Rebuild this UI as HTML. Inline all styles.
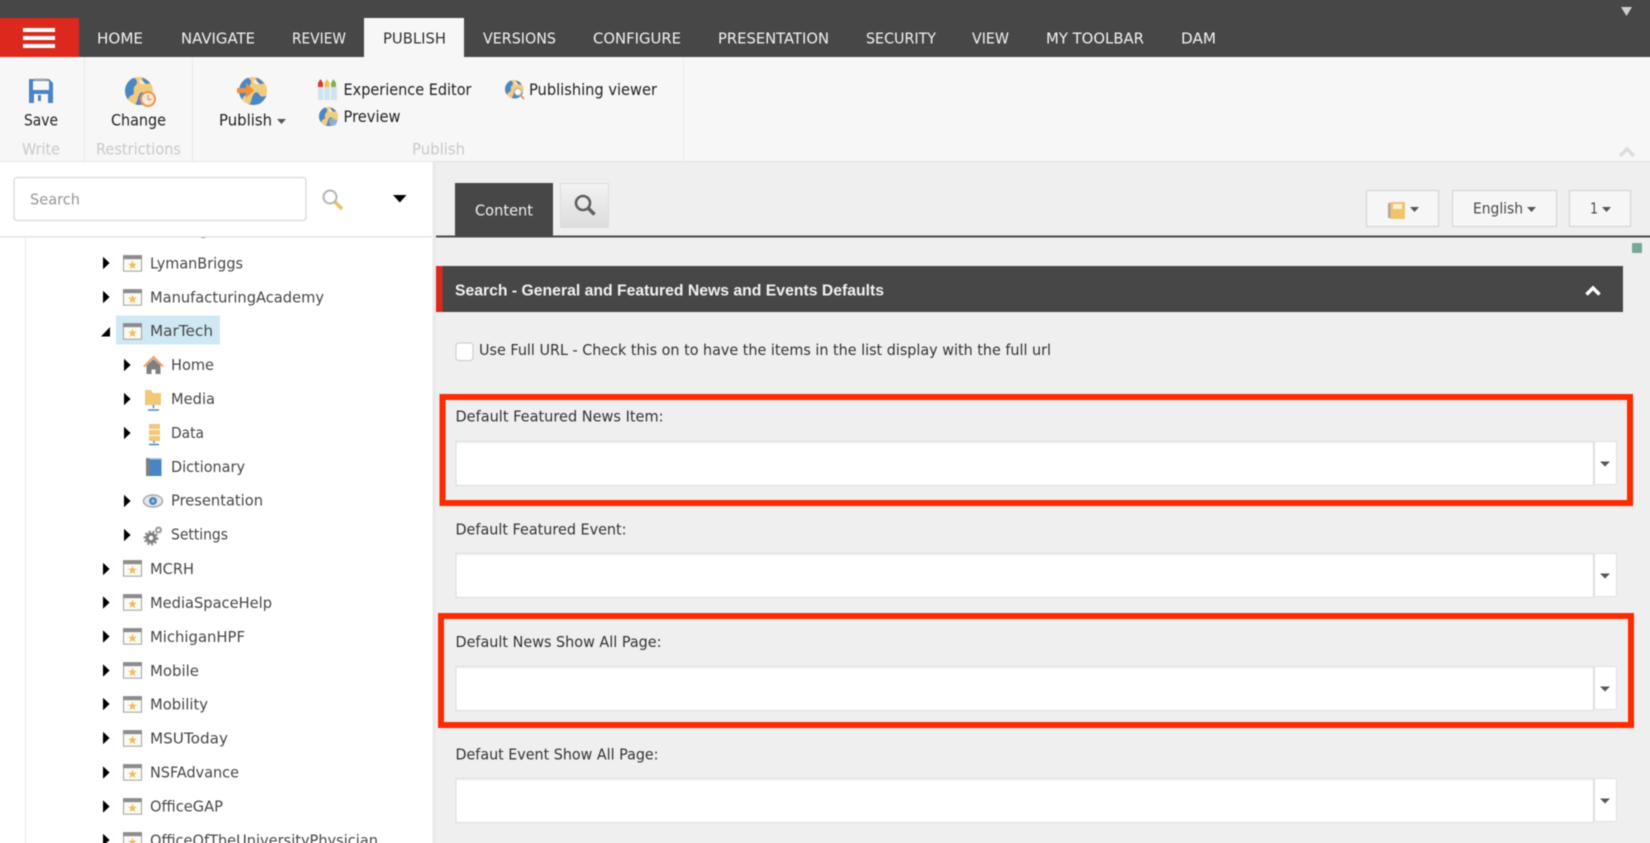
<!DOCTYPE html>
<html><head><meta charset="utf-8"><title>Content Editor</title>
<style>
html,body{margin:0;padding:0;width:1650px;height:843px;background:#efefef}
#wrap{position:relative;width:1650px;height:843px;overflow:hidden}
svg{display:block;position:absolute;left:-10px;top:-10px;filter:blur(.4px)}
text{font-family:"DejaVu Sans","Liberation Sans",sans-serif;font-size:15.2px;fill:#474747}
.tab{fill:#f2f2f2;font-size:15px}
.rb{fill:#222;font-size:15.8px}
.gr{fill:#c9c9c9;font-size:15.8px}
.f{fill:#333;font-size:15.1px}
</style></head><body>
<div id="wrap">
<svg width="1670" height="863" viewBox="-10 -10 1670 863" xmlns="http://www.w3.org/2000/svg">
<defs>
<path id="a" d="M0-6.2 6.6 0 0 6.2Z" fill="#000"/>
<g id="w" transform="translate(0,-.8)">
<rect x=".5" y=".5" width="18" height="15.5" fill="#fafaf4" stroke="#a0a0a0"/>
<rect x="0" y="0" width="19" height="4" fill="#8c8c8c"/>
<path d="M9.5 5.6l1.3 3h3.1l-2.5 2 .9 3.2-2.8-1.8-2.8 1.8.9-3.2-2.5-2h3.1z" fill="#efbd5c"/>
</g>
<g id="globe">
<circle cx="14" cy="14" r="14" fill="#f2cb7e"/>
<path d="M9 .8C4 2.500 0 8 0 14c0 3 1 6 3 8.500 1-3 3-4 5-5 2-2 0-4 1-7 1-2 3-3 3-5 0-2-1-3.500-3-4.700Z" fill="#4b87c6"/>
<path d="M10 27.500c3-3 2-7 5-11 3-3 5 0 6 2 2 2 5 1 6.500 0-2 5-6 9.500-13 9.500Z" fill="#4b87c6"/>
<path d="M17 .5c3 1 6 3 8 6l-4 .5-3-2.500Z" fill="#4b87c6"/>
<path d="M14 3c3 0 5 2 6 4-2 1-4 0-5-1Z" fill="#fbeecb"/>
</g>
<g id="caret"><path d="M0 0H9L4.500 5Z" fill="#555"/></g>
<g id="fld">
<rect x="456" y=".5" width="1137.500" height="44" fill="#fff" stroke="#dcdcdc"/>
<rect x="456.500" y="1" width="1136.500" height="2" fill="#f6f6f6"/>
<rect x="1594.500" y=".5" width="22" height="43" rx="1.500" fill="#fff" stroke="#e0e0e0"/>
<path d="M1600 20.500H1610L1605 25.500Z" fill="#555"/>
</g>
</defs>

<!-- base -->
<rect x="-10" y="-10" width="1670" height="863" fill="#efefef"/>

<!-- top bar -->
<rect x="-10" y="-10" width="1670" height="67" fill="#474747"/>
<rect x="-10" y="18" width="89" height="39" fill="#dd281d"/>
<rect x="23" y="28" width="32" height="4" fill="#fff"/>
<rect x="23" y="36" width="32" height="4" fill="#fff"/>
<rect x="23" y="44" width="32" height="4" fill="#fff"/>
<rect x="364" y="18" width="100" height="39" fill="#f7f7f7"/>
<path d="M1621 7h11l-5.500 9Z" fill="#cfcfcf"/>
<text class="tab" x="97" y="43.500" textLength="46" lengthAdjust="spacingAndGlyphs">HOME</text>
<text class="tab" x="181" y="43.500" textLength="74" lengthAdjust="spacingAndGlyphs">NAVIGATE</text>
<text class="tab" x="292" y="43.500" textLength="54" lengthAdjust="spacingAndGlyphs">REVIEW</text>
<text class="tab" x="383" y="43.500" textLength="63" lengthAdjust="spacingAndGlyphs" style="fill:#333">PUBLISH</text>
<text class="tab" x="483" y="43.500" textLength="73" lengthAdjust="spacingAndGlyphs">VERSIONS</text>
<text class="tab" x="593" y="43.500" textLength="88" lengthAdjust="spacingAndGlyphs">CONFIGURE</text>
<text class="tab" x="718" y="43.500" textLength="111" lengthAdjust="spacingAndGlyphs">PRESENTATION</text>
<text class="tab" x="866" y="43.500" textLength="70" lengthAdjust="spacingAndGlyphs">SECURITY</text>
<text class="tab" x="972" y="43.500" textLength="37" lengthAdjust="spacingAndGlyphs">VIEW</text>
<text class="tab" x="1046" y="43.500" textLength="98" lengthAdjust="spacingAndGlyphs">MY TOOLBAR</text>
<text class="tab" x="1181" y="43.500" textLength="35" lengthAdjust="spacingAndGlyphs">DAM</text>

<!-- ribbon -->
<rect x="-10" y="57" width="1670" height="105" fill="#f7f7f7"/>
<rect x="-10" y="161" width="1670" height="1.500" fill="#e6e6e6"/>
<rect x="84" y="57" width="1" height="104" fill="#e8e8e8"/>
<rect x="192" y="57" width="1" height="104" fill="#e8e8e8"/>
<rect x="683" y="57" width="1" height="104" fill="#ececec"/>
<!-- save icon -->
<path d="M29 79h20l4 4v20H29Z" fill="#4a84c2"/>
<rect x="34" y="78.500" width="13" height="2" fill="#a8a8a8"/>
<rect x="33" y="81" width="16" height="9" fill="#f7f7f7"/>
<rect x="34" y="94" width="14" height="9" fill="#f7f7f7"/>
<rect x="38" y="95" width="3" height="6" fill="#4a84c2"/>
<!-- change icon -->
<use href="#globe" x="125" y="77"/>
<circle cx="148" cy="99" r="7" fill="#fbe9d6" stroke="#ee9350" stroke-width="2"/>
<path d="M148 95v4.500h3.500" fill="none" stroke="#ee9350" stroke-width="1.300"/>
<!-- publish icon -->
<use href="#globe" x="239" y="77"/>
<path d="M237 88h9v-5l8 7.500-8 7.500v-5h-9Z" fill="#ee8f45"/>
<!-- small icons -->
<g>
<rect x="318" y="87" width="19" height="13" fill="#cfe3f0"/>
<path d="M318 87v-4l2.500-4 2.500 4v4Z" fill="#d23a2f"/>
<path d="M324.500 87v-4l2.500-4 2.500 4v4Z" fill="#efc04f"/>
<path d="M331 87v-4l2.500-4 2.500 4v4Z" fill="#86b04a"/>
<path d="M323.700 87v13M330.300 87v13" stroke="#f4f8fb" stroke-width="1"/>
</g>
<g transform="translate(319,107) scale(.68)"><use href="#globe"/></g>
<circle cx="333" cy="122" r="4" fill="#9fb7cf" opacity=".8"/>
<g transform="translate(505,80) scale(.66)"><use href="#globe"/></g>
<circle cx="518" cy="92" r="3.500" fill="#fff" stroke="#aaa"/>
<path d="M520.500 95l3.500 4" stroke="#ee8f45" stroke-width="1.800"/>

<text class="rb" x="24" y="125.500" textLength="34" lengthAdjust="spacingAndGlyphs">Save</text>
<text class="rb" x="111" y="125.500" textLength="55" lengthAdjust="spacingAndGlyphs">Change</text>
<text class="rb" x="219" y="125.500" textLength="53" lengthAdjust="spacingAndGlyphs">Publish</text>
<use href="#caret" x="277" y="119"/>
<text class="rb" x="343.500" y="95" textLength="128" lengthAdjust="spacingAndGlyphs">Experience Editor</text>
<text class="rb" x="343.500" y="122" textLength="57" lengthAdjust="spacingAndGlyphs">Preview</text>
<text class="rb" x="529" y="95" textLength="128" lengthAdjust="spacingAndGlyphs">Publishing viewer</text>
<text class="gr" x="22" y="154.500" textLength="38" lengthAdjust="spacingAndGlyphs">Write</text>
<text class="gr" x="96" y="154.500" textLength="85" lengthAdjust="spacingAndGlyphs">Restrictions</text>
<text class="gr" x="412" y="154.500" textLength="53" lengthAdjust="spacingAndGlyphs">Publish</text>
<path d="M1620 156l7-7 7 7" fill="none" stroke="#dcdcdc" stroke-width="3.500"/>

<!-- left panel -->
<rect x="-10" y="162" width="443" height="691" fill="#fff"/>
<rect x="432.500" y="162" width="3.500" height="691" fill="#e9e9e9"/>
<rect x="25" y="237" width="1" height="616" fill="#ececec"/>

<!-- tree -->
<g>
<rect x="116" y="315.500" width="104" height="29" fill="#cfe8f4"/>
<use href="#w" x="123" y="221"/>
<text x="150" y="235">Lansing</text>

<use href="#a" x="103" y="263"/><use href="#w" x="123" y="256"/>
<text x="150" y="268.500" textLength="93" lengthAdjust="spacingAndGlyphs">LymanBriggs</text>
<use href="#a" x="103" y="297"/><use href="#w" x="123" y="290"/>
<text x="150" y="302.500" textLength="174" lengthAdjust="spacingAndGlyphs">ManufacturingAcademy</text>
<path d="M110 327v9.500h-9Z" fill="#000"/><use href="#w" x="123" y="324"/>
<text x="150" y="336.200" textLength="63" lengthAdjust="spacingAndGlyphs">MarTech</text>

<use href="#a" x="124" y="365"/>
<path d="M144 366.500l9.500-9.500 9.500 9.500" fill="none" stroke="#f0a070" stroke-width="2"/>
<path d="M146.500 365.500l7-6.500 7 6.500v8.500h-5v-4.500h-4v4.500h-5Z" fill="#808080"/>
<text x="171" y="370" textLength="43" lengthAdjust="spacingAndGlyphs">Home</text>

<use href="#a" x="124" y="399"/>
<path d="M145 390h6l2 3h8v12h-16Z" fill="#f2c878"/>
<path d="M153.500 405v3M148 410h11" stroke="#4a84c2" stroke-width="1.500"/>
<text x="171" y="404" textLength="44" lengthAdjust="spacingAndGlyphs">Media</text>

<use href="#a" x="124" y="433"/>
<rect x="149" y="424" width="11" height="5" fill="#f2c878"/><rect x="149" y="430" width="11" height="5" fill="#f2c878"/><rect x="149" y="436" width="11" height="5" fill="#f2c878"/>
<path d="M154 441v2M149 444.500h10" stroke="#4a84c2" stroke-width="1.500"/>
<text x="171" y="438" textLength="33" lengthAdjust="spacingAndGlyphs">Data</text>

<rect x="146" y="458" width="3.500" height="18" fill="#808080"/>
<path d="M149.500 459h12v17h-12Z" fill="#4a84c2"/><rect x="149.500" y="458" width="12" height="1.500" fill="#a8c6e4"/>
<text x="171" y="472" textLength="74" lengthAdjust="spacingAndGlyphs">Dictionary</text>

<use href="#a" x="124" y="501"/>
<ellipse cx="153" cy="501" rx="9.500" ry="6" fill="#e4e8ec" stroke="#a9a9a9" stroke-width="1.500"/>
<circle cx="153" cy="501" r="4" fill="#4a84c2"/><circle cx="153" cy="501" r="1.600" fill="#9cc"/>
<text x="171" y="505.700" textLength="92" lengthAdjust="spacingAndGlyphs">Presentation</text>

<use href="#a" x="124" y="535"/>
<circle cx="151" cy="538" r="5.500" fill="#808080"/><circle cx="151" cy="538" r="2.200" fill="#fff"/>
<circle cx="151" cy="538" r="6.500" fill="none" stroke="#808080" stroke-width="1.800" stroke-dasharray="2 2"/>
<circle cx="158.500" cy="530" r="3.500" fill="#9c9c9c"/><circle cx="158.500" cy="530" r="1.400" fill="#fff"/>
<text x="171" y="539.700" textLength="57" lengthAdjust="spacingAndGlyphs">Settings</text>

<use href="#a" x="103" y="569"/><use href="#w" x="123" y="561"/>
<text x="150" y="574" textLength="44" lengthAdjust="spacingAndGlyphs">MCRH</text>
<use href="#a" x="103" y="602.500"/><use href="#w" x="123" y="595"/>
<text x="150" y="607.800" textLength="122" lengthAdjust="spacingAndGlyphs">MediaSpaceHelp</text>
<use href="#a" x="103" y="636.500"/><use href="#w" x="123" y="629"/>
<text x="150" y="641.800" textLength="95" lengthAdjust="spacingAndGlyphs">MichiganHPF</text>
<use href="#a" x="103" y="670.500"/><use href="#w" x="123" y="663"/>
<text x="150" y="675.800" textLength="49" lengthAdjust="spacingAndGlyphs">Mobile</text>
<use href="#a" x="103" y="704"/><use href="#w" x="123" y="697"/>
<text x="150" y="709.500" textLength="58" lengthAdjust="spacingAndGlyphs">Mobility</text>
<use href="#a" x="103" y="738"/><use href="#w" x="123" y="731"/>
<text x="150" y="743.500" textLength="78" lengthAdjust="spacingAndGlyphs">MSUToday</text>
<use href="#a" x="103" y="772.500"/><use href="#w" x="123" y="765"/>
<text x="150" y="777.500" textLength="89" lengthAdjust="spacingAndGlyphs">NSFAdvance</text>
<use href="#a" x="103" y="806.500"/><use href="#w" x="123" y="799"/>
<text x="150" y="811.500" textLength="73" lengthAdjust="spacingAndGlyphs">OfficeGAP</text>
<use href="#a" x="103" y="840"/><use href="#w" x="123" y="833"/>
<text x="150" y="845.500" textLength="228" lengthAdjust="spacingAndGlyphs">OfficeOfTheUniversityPhysician</text>
</g>

<!-- search header -->
<rect x="-10" y="162" width="442" height="74" fill="#fff"/>
<rect x="-10" y="236" width="442" height="1.500" fill="#e6e6e6"/>
<rect x="14" y="177.500" width="292" height="43" rx="3" fill="#fff" stroke="#dedede" stroke-width="1.500"/>
<text x="30" y="204.500" textLength="50" lengthAdjust="spacingAndGlyphs" style="fill:#979797">Search</text>
<circle cx="330" cy="197" r="6.500" fill="#fff" stroke="#b5b5b5" stroke-width="2"/>
<path d="M335 202l7 7" stroke="#eec06a" stroke-width="3.500"/>
<path d="M393 195h13.500l-6.700 7.500Z" fill="#000"/>

<!-- content tabs -->
<rect x="436" y="235.500" width="1224" height="2" fill="#4a4a4a"/>
<rect x="455" y="183" width="98" height="53" fill="#474747"/>
<text x="475" y="215.500" textLength="58" lengthAdjust="spacingAndGlyphs" style="fill:#f0f0f0">Content</text>
<linearGradient id="g1" x1="0" y1="0" x2="0" y2="1"><stop offset="0" stop-color="#f3f3f3"/><stop offset="1" stop-color="#dcdcdc"/></linearGradient>
<rect x="560.500" y="183.500" width="48" height="44" fill="url(#g1)" stroke="#dddddd"/>
<circle cx="583" cy="203" r="7" fill="none" stroke="#606060" stroke-width="2.600"/>
<path d="M588 208l6.500 6.500" stroke="#606060" stroke-width="3.500"/>

<rect x="1366.500" y="190.500" width="72" height="36" fill="#f6f6f6" stroke="#d6d6d6" stroke-width="1.200"/>
<rect x="1452.500" y="190.500" width="104" height="36" fill="#f6f6f6" stroke="#d6d6d6" stroke-width="1.200"/>
<rect x="1569.500" y="190.500" width="61" height="36" fill="#f6f6f6" stroke="#d6d6d6" stroke-width="1.200"/>
<rect x="1390" y="202" width="15" height="17" rx="1" fill="#f0c36d"/>
<rect x="1388" y="203" width="2.500" height="15" fill="#aaa"/>
<rect x="1393" y="204" width="9" height="5" fill="#fbf0d8"/>
<use href="#caret" x="1410" y="207"/>
<text x="1473" y="213.500" textLength="50" lengthAdjust="spacingAndGlyphs" style="fill:#4a4a4a">English</text>
<use href="#caret" x="1527" y="207"/>
<text x="1590" y="213.500" textLength="8" lengthAdjust="spacingAndGlyphs" style="fill:#4a4a4a">1</text>
<use href="#caret" x="1602" y="207"/>
<rect x="1632" y="243" width="10" height="10" rx="1" fill="#77a898"/>

<!-- section header -->
<rect x="436" y="266" width="1187" height="46" fill="#474747"/>
<rect x="436" y="266" width="6.500" height="46" fill="#dd281d"/>
<text x="455" y="295.300" textLength="429" lengthAdjust="spacingAndGlyphs" style="fill:#f2f2f2;font-weight:bold;font-size:15.800px;font-family:'Liberation Sans',sans-serif">Search - General and Featured News and Events Defaults</text>
<path d="M1586.500 294.500l6.500-6.500 6.500 6.500" fill="none" stroke="#fff" stroke-width="3.500"/>

<!-- checkbox -->
<rect x="456" y="343" width="17" height="17.500" rx="3" fill="#fff" stroke="#c8c8c8"/>
<text class="f" x="479" y="355" textLength="572" lengthAdjust="spacingAndGlyphs">Use Full URL - Check this on to have the items in the list display with the full url</text>

<!-- fields -->
<text class="f" x="455.500" y="421.700" textLength="208" lengthAdjust="spacingAndGlyphs">Default Featured News Item:</text>
<use href="#fld" y="441"/>
<text class="f" x="455.500" y="534.500" textLength="171" lengthAdjust="spacingAndGlyphs">Default Featured Event:</text>
<use href="#fld" y="553"/>
<text class="f" x="455.500" y="646.800" textLength="206" lengthAdjust="spacingAndGlyphs">Default News Show All Page:</text>
<use href="#fld" y="666"/>
<text class="f" x="455.500" y="759.300" textLength="203" lengthAdjust="spacingAndGlyphs">Defaut Event Show All Page:</text>
<use href="#fld" y="778"/>

<!-- red boxes -->
<rect x="442.500" y="397" width="1187.500" height="106" fill="none" stroke="#ff2a00" stroke-width="6"/>
<rect x="441" y="616" width="1190" height="109" fill="none" stroke="#ff2a00" stroke-width="6"/>
</svg>
</div>
</body></html>
